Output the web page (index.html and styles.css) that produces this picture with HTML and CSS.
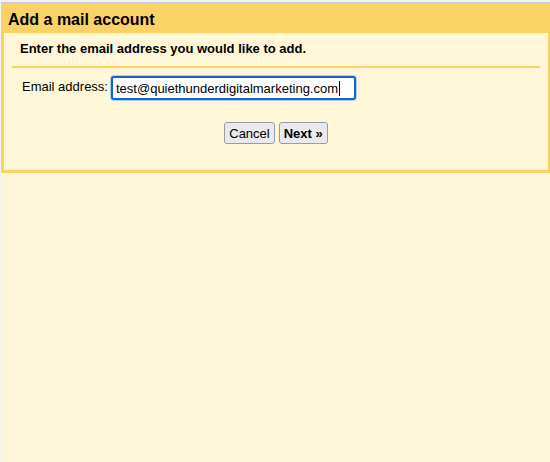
FILE: index.html
```html
<!DOCTYPE html>
<html>
<head>
<meta charset="utf-8">
<title>Add a mail account</title>
<link rel="stylesheet" href="styles.css">
</head>
<body>
<div class="page">
  <div class="topline"></div>
  <div class="dialog">
    <div class="title">Add a mail account</div>
    <div class="body">
      <div class="prompt">Enter the email address you would like to add.</div>
      <div class="rule"></div>
      <div class="field">
        <label class="label" for="email">Email address:</label>
        <div class="input"><span class="value">test@quiethunderdigitalmarketing.com</span><span class="caret"></span></div>
      </div>
      <div class="actions">
        <button class="btn">Cancel</button>
        <button class="btn btn-primary">Next »</button>
      </div>
    </div>
  </div>
</div>
</body>
</html>
```

FILE: styles.css
```css
html, body {
  margin: 0;
  padding: 0;
  background: #fff7d7;
  font-family: "Liberation Sans", Arial, sans-serif;
  color: #000;
}
.page {
  min-height: 462px;
  border-left: 1px solid #f4f4f0;
}
.topline {
  height: 2px;
  background: #f3f3f5;
  border-bottom: 1px solid #c9cad8;
}
.dialog {
  background: #fad265;
  padding: 0 2px 3px 3px;
}
.title {
  height: 27px;
  padding-top: 3px;
  line-height: 28px;
  padding-left: 4px;
  font-size: 16px;
  font-weight: bold;
  box-sizing: content-box;
}
.body {
  background: #fff7d7;
  height: 136px;
  padding-top: 1px;
}
.prompt {
  font-size: 13px;
  font-weight: bold;
  padding-left: 16px;
  margin-top: 7px;
  line-height: 16px;
}
.rule {
  height: 2px;
  background: #fad265;
  margin: 9px 8px 0 8px;
}
.field {
  display: flex;
  align-items: flex-start;
  margin-top: 8px;
  padding-left: 18px;
}
.label {
  font-size: 13px;
  line-height: 16px;
  margin-top: 3px;
  width: 89px;
}
.input {
  box-sizing: border-box;
  width: 245px;
  height: 24px;
  border: 2px solid #1160d8;
  border-radius: 3px;
  box-shadow: 0 0 0 1px #a9d3e8;
  background: #fff;
  display: flex;
  align-items: center;
  padding-left: 3px;
  font-size: 13px;
}
.caret {
  display: inline-block;
  width: 1px;
  height: 15px;
  background: #000;
  margin-left: 1px;
}
.actions {
  display: flex;
  justify-content: center;
  gap: 4px;
  margin-top: 22px;
  padding-left: 0;
}
.btn {
  font-family: "Liberation Sans", Arial, sans-serif;
  font-size: 13px;
  height: 22px;
  padding: 0 4px;
  border: 1px solid #9a9aa2;
  border-radius: 3px;
  background: #e9e9ee;
  color: #000;
}
.btn-primary {
  font-weight: bold;
}
```
